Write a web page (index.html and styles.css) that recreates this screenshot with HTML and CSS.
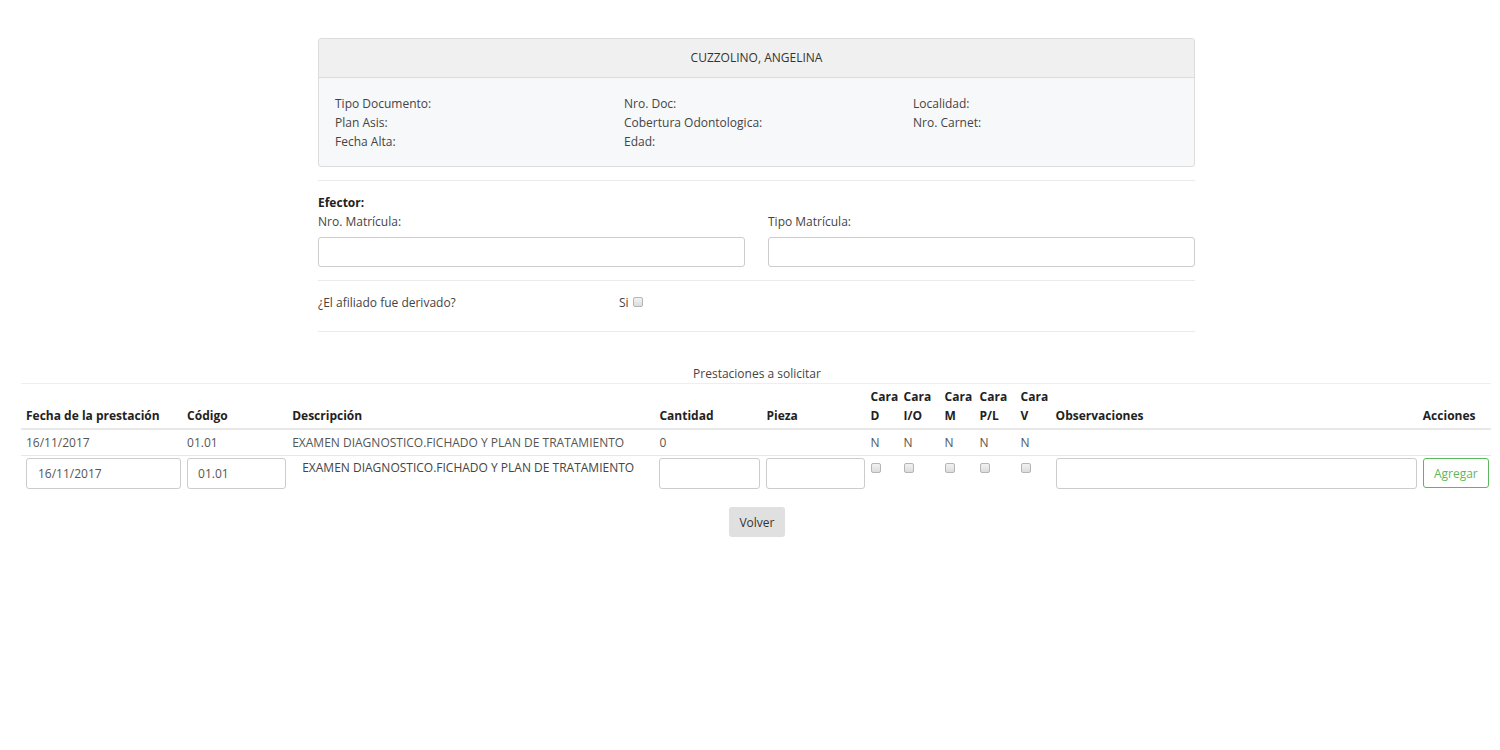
FILE: index.html
```html
<!DOCTYPE html>
<html lang="es">
<head>
<meta charset="utf-8">
<title>Prestaciones</title>
<link rel="stylesheet" href="styles.css">
</head>
<body>
<div class="page">
  <div class="container">
    <div class="card">
      <div class="card-head">CUZZOLINO, ANGELINA</div>
      <div class="card-body">
        <div class="info-col">
          <div>Tipo Documento:</div>
          <div>Plan Asis:</div>
          <div>Fecha Alta:</div>
        </div>
        <div class="info-col">
          <div>Nro. Doc:</div>
          <div>Cobertura Odontologica:</div>
          <div>Edad:</div>
        </div>
        <div class="info-col">
          <div>Localidad:</div>
          <div>Nro. Carnet:</div>
        </div>
      </div>
    </div>
    <hr class="sep sep-1">
    <div class="efector-title">Efector:</div>
    <div class="two-cols">
      <div class="field">
        <label>Nro. Matrícula:</label>
        <input type="text" class="input">
      </div>
      <div class="field">
        <label>Tipo Matrícula:</label>
        <input type="text" class="input">
      </div>
    </div>
    <hr class="sep sep-2">
    <div class="derivado">
      <span class="derivado-q">¿El afiliado fue derivado?</span>
      <span class="derivado-si">Si <span class="chk"></span></span>
    </div>
    <hr class="sep sep-3">
  </div>

  <div class="section-title">Prestaciones a solicitar</div>
  <table class="grid">
    <colgroup>
      <col class="c-fecha"><col class="c-cod"><col class="c-desc"><col class="c-cant"><col class="c-pieza">
      <col class="c-d"><col class="c-io"><col class="c-m"><col class="c-pl"><col class="c-v">
      <col class="c-obs"><col class="c-acc">
    </colgroup>
    <thead>
      <tr>
        <th>Fecha de la prestación</th>
        <th>Código</th>
        <th>Descripción</th>
        <th>Cantidad</th>
        <th>Pieza</th>
        <th>Cara D</th>
        <th>Cara I/O</th>
        <th>Cara M</th>
        <th>Cara P/L</th>
        <th>Cara V</th>
        <th>Observaciones</th>
        <th class="right">Acciones</th>
      </tr>
    </thead>
    <tbody>
      <tr class="data-row">
        <td>16/11/2017</td>
        <td>01.01</td>
        <td>EXAMEN DIAGNOSTICO.FICHADO Y PLAN DE TRATAMIENTO</td>
        <td>0</td>
        <td></td>
        <td>N</td>
        <td>N</td>
        <td>N</td>
        <td>N</td>
        <td>N</td>
        <td></td>
        <td></td>
      </tr>
      <tr class="edit-row">
        <td><input type="text" class="input cell-input pad" value="16/11/2017"></td>
        <td><input type="text" class="input cell-input" value="01.01"></td>
        <td class="desc-edit">EXAMEN DIAGNOSTICO.FICHADO Y PLAN DE TRATAMIENTO</td>
        <td><input type="text" class="input cell-input"></td>
        <td><input type="text" class="input cell-input"></td>
        <td><span class="chk"></span></td>
        <td><span class="chk"></span></td>
        <td><span class="chk"></span></td>
        <td><span class="chk"></span></td>
        <td><span class="chk"></span></td>
        <td><input type="text" class="input cell-input"></td>
        <td><button class="btn-add">Agregar</button></td>
      </tr>
    </tbody>
  </table>
  <div class="actions">
    <button class="btn-back">Volver</button>
  </div>
</div>
</body>
</html>
```

FILE: styles.css
```css
* { box-sizing: border-box; }
html, body { margin: 0; padding: 0; background: #fff; }
body {
  font-family: "Open Sans", "Noto Sans", "Liberation Sans", sans-serif;
  font-size: 12px;
  color: #444;
  line-height: 19px;
}
.page { padding-top: 38px; }
.container { width: 877px; margin-left: 318px; }
.card {
  border: 1px solid #dcdcdc;
  border-radius: 3px;
  background: #f7f8f9;
}
.card-head {
  height: 39px;
  line-height: 38px;
  text-align: center;
  background: #f0f0f0;
  border-bottom: 1px solid #dcdcdc;
  border-radius: 3px 3px 0 0;
  color: #333;
}
.card-body {
  display: grid;
  grid-template-columns: 289px 289px 289px;
  padding: 16px 16px 17px 16px;
  height: 88px;
}
.sep { border: 0; border-top: 1px solid #eaeaea; margin: 0; }
.sep-1 { margin-top: 13px; }
.efector-title { font-weight: bold; margin-top: 12px; color: #222; }
.two-cols { display: grid; grid-template-columns: 427px 427px; column-gap: 23px; }
.field label { display: block; height: 19px; }
.field .input { display: block; margin-top: 6px; width: 100%; height: 30px; }
.input {
  border: 1px solid #ccc;
  border-radius: 3px;
  background: #fff;
  font-family: inherit;
  font-size: 12px;
  color: #555;
  padding: 0 10px;
  outline: none;
}
.sep-2 { margin-top: 13px; }
.derivado { display: flex; height: 50px; align-items: flex-start; padding-top: 12px; }
.derivado-q { width: 301px; }
.derivado-si { display: flex; align-items: center; gap: 4px; }
.chk {
  display: inline-block;
  width: 10px; height: 10px;
  border: 1px solid #b5b5b5;
  border-radius: 2px;
  background: linear-gradient(#f2f2f2, #dcdcdc);
}
.derivado-si .chk { margin-top: -2px; }
.section-title {
  text-align: center;
  margin-top: 32px;
  margin-left: 14px;
  height: 19px;
  line-height: 19px;
}
.grid {
  margin-left: 21px;
  width: 1470px;
  border-collapse: collapse;
  table-layout: fixed;
  border-top: 1px solid #eee;
}
.c-fecha { width: 161px; }
.c-cod { width: 105px; }
.c-desc { width: 367px; }
.c-cant { width: 107px; }
.c-pieza { width: 104px; }
.c-d { width: 33px; }
.c-io { width: 41px; }
.c-m { width: 35px; }
.c-pl { width: 41px; }
.c-v { width: 35px; }
.c-obs { width: 367px; }
.c-acc { width: 73px; }
.grid th {
  text-align: left;
  vertical-align: bottom;
  font-weight: bold;
  color: #222;
  padding: 3px 5px 3px 5px;
  border-bottom: 2px solid #e8e8e8;
  line-height: 19px;
}
.grid th.right { text-align: right; padding-right: 16px; }
.grid td { padding: 3px 5px; vertical-align: top; }
.data-row td { border-bottom: 1px solid #e8e8e8; height: 25px; line-height: 19px; color: #555; }
.edit-row td { padding: 2px 1px 3px 5px; color: #444; }
.cell-input { display: block; width: 100%; height: 31px; }
.edit-row .input.pad { padding-left: 11px; }
.edit-row td.desc-edit { padding-left: 15px; padding-top: 2px; line-height: 19px; }
.edit-row .chk { margin-top: 5px; }
.btn-add {
  display: block;
  height: 30px;
  width: 66px;
  border: 1px solid #5cb85c;
  border-radius: 3px;
  background: #fff;
  color: #5cb85c;
  font-family: inherit;
  font-size: 12px;
  padding: 0;
}
.actions { display: flex; justify-content: center; margin-top: 15px; margin-left: 14px; }
.btn-back {
  height: 30px;
  width: 56px;
  border: 0;
  border-radius: 3px;
  background: #e0e0e0;
  color: #333;
  font-family: inherit;
  font-size: 12px;
  padding: 0;
}
```
